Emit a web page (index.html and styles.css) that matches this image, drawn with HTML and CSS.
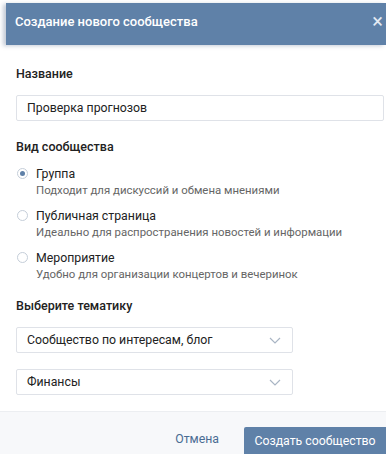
FILE: index.html
```html
<!DOCTYPE html>
<html lang="ru">
<head>
    <meta charset="UTF-8">
    <title>Создание нового сообщества</title>
    <link rel="stylesheet" href="styles.css">
</head>
<body>
<div class="box">
    <div class="box-header">
        <span class="box-title">Создание нового сообщества</span>
        <span class="box-close">×</span>
    </div>
    <div class="box-body">
        <div class="label">Название</div>
        <div class="input">Проверка прогнозов</div>

        <div class="label">Вид сообщества</div>
        <div class="radio checked">
            <span class="radio-dot"></span>
            <div>
                <div class="radio-title">Группа</div>
                <div class="radio-desc">Подходит для дискуссий и обмена мнениями</div>
            </div>
        </div>
        <div class="radio">
            <span class="radio-dot"></span>
            <div>
                <div class="radio-title">Публичная страница</div>
                <div class="radio-desc">Идеально для распространения новостей и информации</div>
            </div>
        </div>
        <div class="radio last">
            <span class="radio-dot"></span>
            <div>
                <div class="radio-title">Мероприятие</div>
                <div class="radio-desc">Удобно для организации концертов и вечеринок</div>
            </div>
        </div>

        <div class="label">Выберите тематику</div>
        <div class="select">
            <span>Сообщество по интересам, блог</span>
            <svg width="12" height="7" viewBox="0 0 12 7"><path d="M1 1l5 5 5-5" fill="none" stroke="#a9b5c4" stroke-width="1.2"/></svg>
        </div>
        <div class="select">
            <span>Финансы</span>
            <svg width="12" height="7" viewBox="0 0 12 7"><path d="M1 1l5 5 5-5" fill="none" stroke="#a9b5c4" stroke-width="1.2"/></svg>
        </div>
    </div>
    <div class="box-footer">
        <span class="cancel">Отмена</span>
        <span class="button">Создать сообщество</span>
    </div>
</div>
</body>
</html>
```

FILE: styles.css
```css
body {
    margin: 0;
    background: #fff;
    font-family: Roboto, "Liberation Sans", sans-serif;
    color: #222;
    overflow: hidden;
}

.box {
    padding-top: 3px;
}

.box-header {
    margin-left: 6px;
    height: 42px;
    background: #5f81a8;
    display: flex;
    align-items: center;
    justify-content: space-between;
    padding: 0 0 6px 9px;
    box-sizing: border-box;
    box-shadow: -3px 1px 4px rgba(90, 110, 140, 0.35);
}

.box-title {
    color: #fff;
    font-size: 13px;
    font-weight: 500;
}

.box-close {
    color: #e4ebf3;
    font-size: 20px;
    line-height: 1;
    margin-right: 3px;
}

.box-body {
    padding: 21px 2px 0 16px;
}

.label {
    font-size: 12.5px;
    font-weight: 500;
    color: #222;
    margin-bottom: 14px;
}

.input {
    height: 26px;
    border: 1px solid #dfe2e8;
    border-radius: 2px;
    box-sizing: border-box;
    padding: 0 10px;
    display: flex;
    align-items: center;
    font-size: 12.3px;
    margin-bottom: 18px;
}

.radio {
    display: flex;
    align-items: flex-start;
    margin-bottom: 10px;
    padding-left: 1px;
}

.radio.checked {
    margin-top: -2px;
}

.radio-dot {
    width: 11px;
    height: 11px;
    border: 1px solid #c5ced9;
    border-radius: 50%;
    box-sizing: border-box;
    margin: 2px 8px 0 0;
    flex-shrink: 0;
    display: flex;
    align-items: center;
    justify-content: center;
}

.checked .radio-dot::after {
    content: "";
    width: 5px;
    height: 5px;
    border-radius: 50%;
    background: #5f81a8;
}

.radio-title {
    font-size: 12.3px;
    line-height: 16px;
}

.radio-desc {
    font-size: 11.4px;
    line-height: 16px;
    color: #656565;
}

.radio.last {
    margin-bottom: 16px;
}

.select {
    width: 277px;
    height: 26px;
    border: 1px solid #dfe2e8;
    border-radius: 2px;
    box-sizing: border-box;
    padding: 0 11px 0 10px;
    display: flex;
    align-items: center;
    justify-content: space-between;
    font-size: 12.3px;
    margin-bottom: 16px;
}

.box-footer {
    margin-top: 3px;
    height: 42px;
    background: #f7f8fa;
    border-top: 1px solid #eceef1;
    display: flex;
    align-items: flex-end;
    justify-content: flex-end;
}

.cancel {
    font-size: 12.3px;
    color: #4a6c93;
    align-self: center;
    margin: 12px 25px 0 0;
}

.button {
    width: 142px;
    height: 27px;
    background: #5f81a8;
    color: #fff;
    font-size: 12.3px;
    display: flex;
    align-items: center;
    justify-content: center;
    border-radius: 2px 0 0 0;
}
```
